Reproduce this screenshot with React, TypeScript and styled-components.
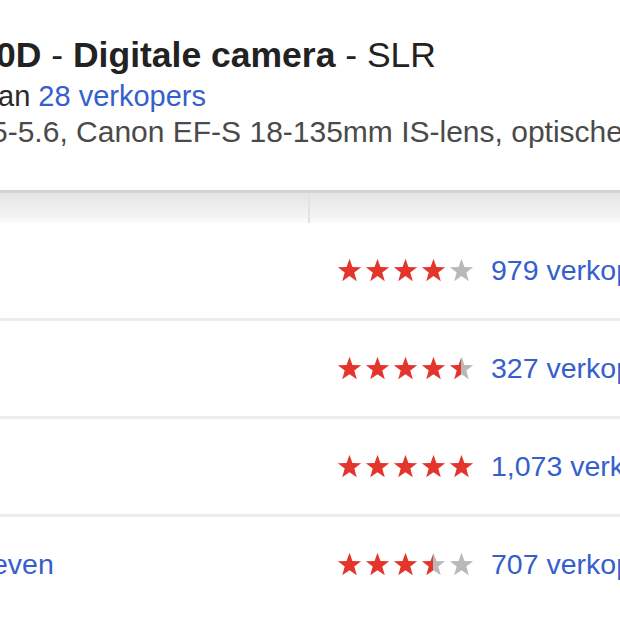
import React, { useId } from 'react';
import styled, { createGlobalStyle } from 'styled-components';

const GlobalStyle = createGlobalStyle`
    body {
        margin: 0;
        background: #fff;
        font-family: "Liberation Sans", Arial, sans-serif;
    }
`;

const Page = styled.div`
    width: 620px;
    height: 620px;
    overflow: hidden;
    background: #fff;
`;

const Summary = styled.div`
    padding-top: 32px;
    height: 158px;
    white-space: nowrap;
`;

const Title = styled.div`
    font-size: 35.5px;
    line-height: 46px;
    color: #222;
    margin-left: -4px;
    b {
        font-weight: bold;
    }
`;

const Line = styled.div<{ $shift: number; $size: number; $muted?: boolean }>`
    font-size: ${(p) => p.$size}px;
    line-height: 36px;
    margin-left: ${(p) => p.$shift}px;
    color: ${(p) => (p.$muted ? '#4a4a4a' : '#2a2a2a')};
`;

const Link = styled.span`
    color: #3560cc;
`;

const HeadBar = styled.div`
    display: grid;
    grid-template-columns: 308px 1fr;
    height: 30px;
    border-top: 3px solid #d3d3d3;
    background: linear-gradient(#e4e4e4, #f2f2f2 70%, #fbfbfb);
`;

const HeadCell = styled.div`
    & + & {
        border-left: 2px solid #e2e2e2;
    }
`;

const Row = styled.div`
    display: grid;
    grid-template-columns: 308px 1fr;
    align-items: center;
    height: 95px;
    border-bottom: 3px solid #ececec;
    white-space: nowrap;
    font-size: 28.5px;
    &:last-child {
        border-bottom: none;
    }
`;

const Left = styled.div<{ $shift: number }>`
    color: #3560cc;
    overflow: hidden;
    margin-left: ${(p) => p.$shift}px;
`;

const Right = styled.div`
    display: flex;
    align-items: center;
    padding-left: 29px;
    gap: 17px;
`;

const Stars = styled.div`
    display: flex;
    gap: 3px;
`;

const Sellers = styled.span`
    color: #3560cc;
`;

function Star({ fill }: { fill: number }) {
    const id = useId();
    return (
        <svg width="25" height="25" viewBox="0 0 24 24">
            <defs>
                <linearGradient id={id}>
                    <stop offset={fill} stopColor="#e3352c" />
                    <stop offset={fill} stopColor="#b9b9b9" />
                </linearGradient>
            </defs>
            <polygon
                points="12,0.8 14.8,8.6 23.2,8.8 16.6,13.9 19,22.4 12,17.4 5,22.4 7.4,13.9 0.8,8.8 9.2,8.6"
                fill={`url(#${id})`}
            />
        </svg>
    );
}

function Rating({ value }: { value: number }) {
    return (
        <Stars>
            {[0, 1, 2, 3, 4].map((i) => (
                <Star key={i} fill={Math.max(0, Math.min(1, value - i))} />
            ))}
        </Stars>
    );
}

const rows = [
    { left: '', rating: 4, sellers: '979 verkopers' },
    { left: '', rating: 4.5, sellers: '327 verkopers' },
    { left: '', rating: 5, sellers: '1,073 verkopers' },
    { left: 'even', rating: 3.5, sellers: '707 verkopers' },
];

export default function App() {
    return (
        <Page>
            <GlobalStyle />
            <Summary>
                <Title>
                    <b>0D</b> - <b>Digitale camera</b> - SLR
                </Title>
                <Line $shift={-2} $size={29}>
                    an <Link>28 verkopers</Link>
                </Line>
                <Line $shift={-9} $size={30} $muted>
                    5-5.6, Canon EF-S 18-135mm IS-lens, optische zoeker
                </Line>
            </Summary>
            <HeadBar>
                <HeadCell />
                <HeadCell />
            </HeadBar>
            {rows.map((r, i) => (
                <Row key={i}>
                    <Left $shift={r.left ? -8 : 0}>{r.left}</Left>
                    <Right>
                        <Rating value={r.rating} />
                        <Sellers>{r.sellers}</Sellers>
                    </Right>
                </Row>
            ))}
        </Page>
    );
}
